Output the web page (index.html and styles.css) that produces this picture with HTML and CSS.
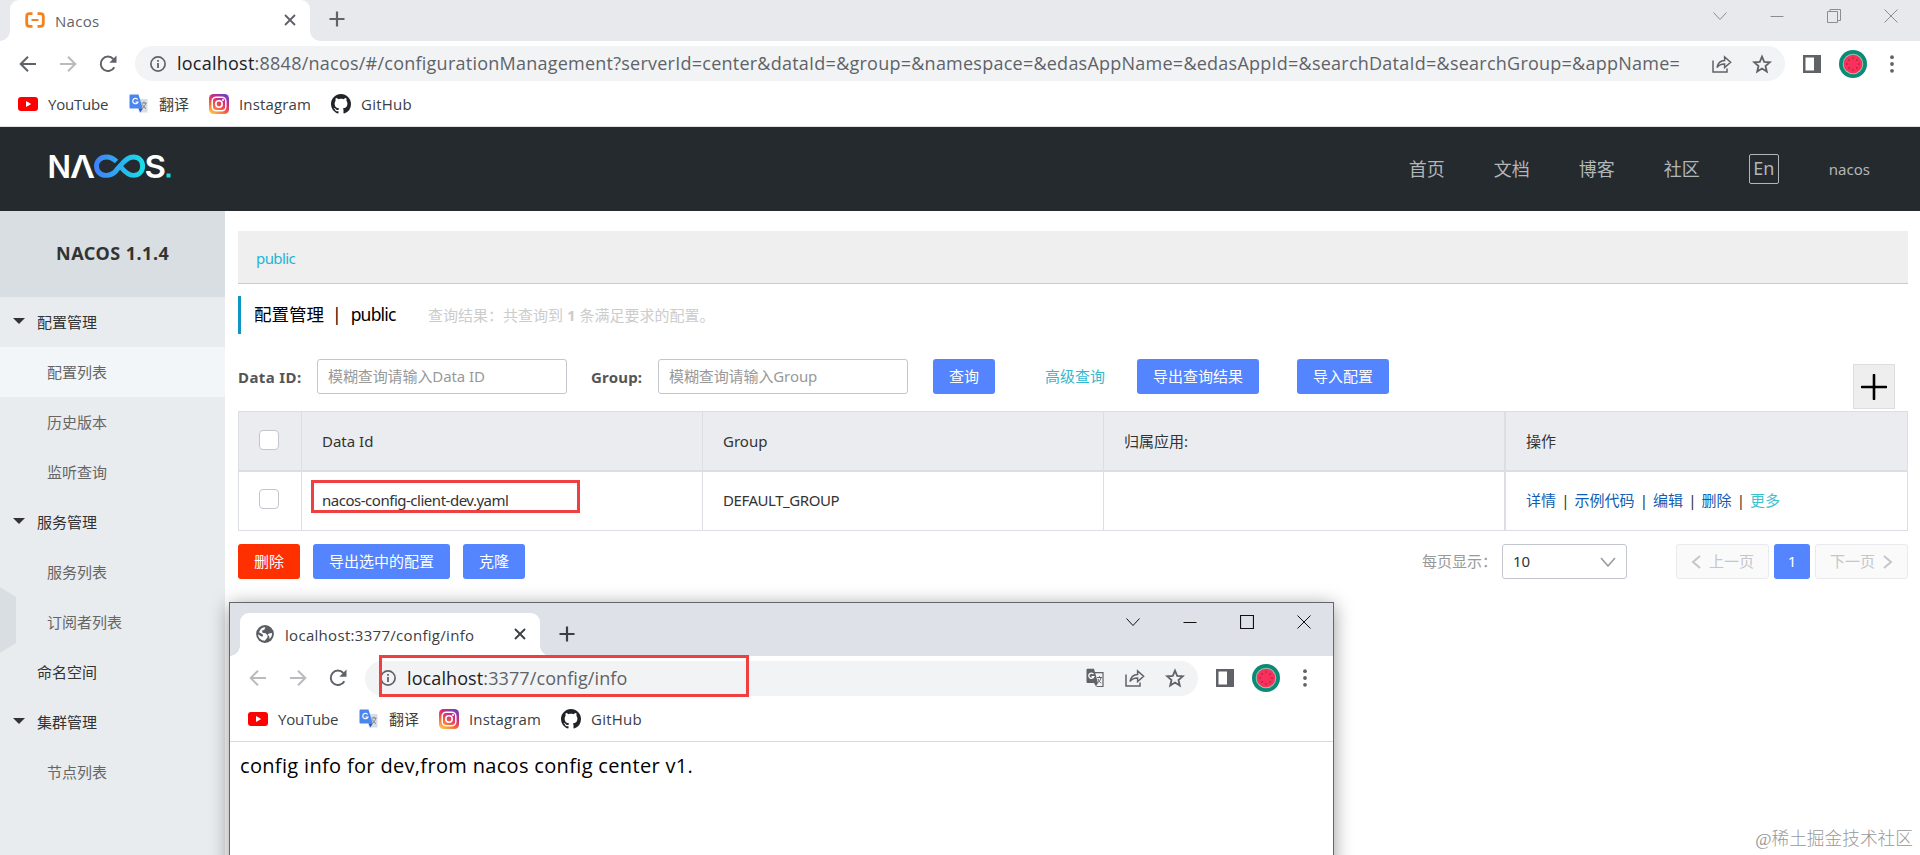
FILE: index.html
```html
<!DOCTYPE html>
<html lang="zh-CN">
<head>
    <meta charset="UTF-8">
    <title>Nacos</title>
    <link rel="stylesheet" href="styles.css">
</head>
<body>
    <!-- 公用图标 -->
    <svg class="defs" width="0" height="0">
        <defs>
            <linearGradient id="igcolor" x1="0.2" y1="1" x2="0.8" y2="0">
                <stop offset="0" stop-color="#fdc34b"/>
                <stop offset="0.35" stop-color="#f5603a"/>
                <stop offset="0.65" stop-color="#d42b7d"/>
                <stop offset="1" stop-color="#6a3fc4"/>
            </linearGradient>
            <linearGradient id="logocolor" x1="0" y1="0" x2="1" y2="0">
                <stop offset="0" stop-color="#3f83fb"/>
                <stop offset="1" stop-color="#18dce6"/>
            </linearGradient>
        </defs>
        <symbol id="back" viewBox="0 0 20 20"><path d="M18 10H3M10 2.7L2.7 10l7.3 7.3" fill="none" stroke="currentColor" stroke-width="2"/></symbol>
        <symbol id="forward" viewBox="0 0 20 20"><path d="M2 10h15M10 2.7l7.3 7.3-7.3 7.3" fill="none" stroke="currentColor" stroke-width="2"/></symbol>
        <symbol id="reload" viewBox="0 0 20 20"><path d="M16.3 13.2A7.2 7.2 0 1 1 15.3 5" fill="none" stroke="currentColor" stroke-width="2"/><path d="M18.5 1.6v7.2h-7.2z" fill="currentColor"/></symbol>
        <symbol id="info" viewBox="0 0 16 16"><circle cx="8" cy="8" r="7.1" fill="none" stroke="currentColor" stroke-width="1.7"/><path d="M7.1 7h1.8v5H7.1zM7.1 4h1.8v1.8H7.1z" fill="currentColor"/></symbol>
        <symbol id="share" viewBox="0 0 20 20"><path d="M1 6.500V18h14v-3.500M5 13.500c.8-4.400 3.400-6.700 7.600-6.900V3l6 5.300-6 5.300V10c-3.600-.1-5.700 1-7.600 3.500z" fill="none" stroke="currentColor" stroke-width="1.500"/></symbol>
        <symbol id="star" viewBox="0 0 20 20"><path d="M10 2.600l2.200 5.200 5.600.5-4.300 3.700 1.300 5.500L10 14.600l-4.800 2.900 1.300-5.500-4.300-3.700 5.600-.5z" fill="none" stroke="currentColor" stroke-width="1.800"/></symbol>
        <symbol id="panel" viewBox="0 0 18 18"><path d="M0 0h18v18H0zM2.500 2.500v13h8.500v-13z" fill="currentColor" fill-rule="evenodd"/></symbol>
        <symbol id="melon" viewBox="0 0 28 28">
            <circle cx="14" cy="14" r="14" fill="#0b8a78"/>
            <circle cx="14" cy="14" r="10.300" fill="#8fc9a8"/>
            <circle cx="14" cy="14" r="9.300" fill="#f9305c"/>
            <g fill="#8d2140"><circle cx="14" cy="8" r=".8"/><circle cx="18" cy="10" r=".8"/><circle cx="20" cy="14" r=".8"/><circle cx="18" cy="18" r=".8"/><circle cx="14" cy="20" r=".8"/><circle cx="10" cy="18" r=".8"/><circle cx="8" cy="14" r=".8"/><circle cx="10" cy="10" r=".8"/></g>
        </symbol>
        <symbol id="dots" viewBox="0 0 6 18"><g fill="currentColor"><circle cx="3" cy="2.200" r="1.900"/><circle cx="3" cy="9" r="1.900"/><circle cx="3" cy="15.800" r="1.900"/></g></symbol>
        <symbol id="close" viewBox="0 0 12 12"><path d="M1 1l10 10M11 1L1 11" fill="none" stroke="currentColor" stroke-width="1.900"/></symbol>
        <symbol id="add" viewBox="0 0 16 16"><path d="M8 .5v15M.5 8h15" fill="none" stroke="currentColor" stroke-width="2.200"/></symbol>
        <symbol id="win_down" viewBox="0 0 14 14"><path d="M.5 3.500L7 10.500l6.500-7" fill="none" stroke="currentColor"/></symbol>
        <symbol id="win_min" viewBox="0 0 14 14"><path d="M.5 7.500h13" fill="none" stroke="currentColor"/></symbol>
        <symbol id="win_restore" viewBox="0 0 14 14"><path d="M.5 2.500h10v11H.5zM3 2.500v-2h10.500v11h-3" fill="none" stroke="currentColor"/></symbol>
        <symbol id="win_max" viewBox="0 0 14 14"><path d="M.5.5h13v13H.5z" fill="none" stroke="currentColor" stroke-width="1.200"/></symbol>
        <symbol id="win_close" viewBox="0 0 14 14"><path d="M.5.5l13 13M13.500.5l-13 13" fill="none" stroke="currentColor"/></symbol>
        <symbol id="youtube" viewBox="0 0 20 20"><rect y="3" width="20" height="14" rx="3" fill="#f00"/><path d="M8 7v6l5.200-3z" fill="#fff"/></symbol>
        <symbol id="translate" viewBox="0 0 20 20">
            <path d="M7 5h11.500v13.500H10z" fill="#dadde1"/>
            <path d="M1.500.5h8l4.300 14H1.500A1 1 0 0 1 .5 13.500v-12a1 1 0 0 1 1-1z" fill="#4a86ee"/>
            <path d="M9.500 14.500h4.300l-2.500 4z" fill="#2a56c6"/>
            <path d="M8.700 5.500A2.700 2.700 0 1 0 9 8H6.500" fill="none" stroke="#fff" stroke-width="1.200"/>
            <path d="M12.500 9h5M15 7.700V9M16.800 9c-.5 2.500-2 4.500-3.500 5.500M13.500 10.500c.7 1.700 2 3.300 3.500 4.200" fill="none" stroke="#717b87" stroke-width=".9"/>
        </symbol>
        <symbol id="instagram" viewBox="0 0 20 20"><rect width="20" height="20" rx="4.500" fill="url(#igcolor)"/><rect x="3.200" y="3.200" width="13.600" height="13.600" rx="4" fill="none" stroke="#fff" stroke-width="1.500"/><circle cx="10" cy="10" r="3.200" fill="none" stroke="#fff" stroke-width="1.600"/><circle cx="14" cy="6" r="1" fill="#fff"/></symbol>
        <symbol id="github" viewBox="0 0 16 16"><path fill="#202328" d="M8 0C3.580 0 0 3.580 0 8c0 3.540 2.290 6.530 5.470 7.590.4.070.55-.17.55-.38 0-.19-.01-.82-.01-1.490-2.010.37-2.530-.49-2.690-.94-.09-.23-.48-.94-.82-1.130-.28-.15-.68-.52-.01-.53.63-.01 1.080.58 1.230.82.72 1.210 1.870.87 2.330.66.07-.52.28-.87.51-1.070-1.780-.2-3.640-.89-3.640-3.950 0-.87.31-1.590.82-2.150-.08-.2-.36-1.020.08-2.120 0 0 .67-.21 2.200.82.64-.18 1.320-.27 2-.27s1.360.09 2 .27c1.530-1.040 2.200-.82 2.200-.82.44 1.100.16 1.920.08 2.120.51.56.82 1.270.82 2.150 0 3.070-1.870 3.750-3.650 3.950.29.25.54.73.54 1.480 0 1.070-.01 1.930-.01 2.200 0 .21.15.46.55.38A8.010 8.010 0 0 0 16 8c0-4.420-3.580-8-8-8z"/></symbol>
        <symbol id="gtrans" viewBox="0 0 18 20">
            <path d="M8.500 4.700H17v13.800h-6.500" fill="none" stroke="currentColor" stroke-width="1.200"/>
            <path d="M1.500.8H8l4 14.200H1.500a1 1 0 0 1-1-1V1.800a1 1 0 0 1 1-1zM8 15h4l-2 3.500z" fill="currentColor"/>
            <path d="M7.500 6.200A2.600 2.600 0 1 0 7.800 8.700H5.500" fill="none" stroke="#fff" stroke-width="1.300"/>
            <path d="M11 9.500h5M13.500 8.200v1.300M15 9.500c-.5 2.500-1.600 4-3 5M12 11c.6 1.600 1.800 3.200 3.300 4.200" fill="none" stroke="currentColor"/>
        </symbol>
        <symbol id="globe" viewBox="0 0 18 18"><circle cx="9" cy="9" r="8.900" fill="#5a5e63"/><path d="M9.500 2.200l-1.200 2.600-2.300.8.500 2.200 3 .4 2.200 2.300-.4 2.300-2.600 3C5 15.600 2.300 13 2 9.300l3.300 2.200 1.900-.3-.6-2L3 7.200C4 4 6.500 2 9.500 2.200zM13 8.500l3-.5c.2 2.500-.8 4.700-2.500 6l-.3-2.700-1.500-1.500z" fill="#fff"/></symbol>
    </svg>

    <div class="browser">
        <div class="tabbar">
            <div class="tab">
                <svg class="tab_icon" viewBox="0 0 20 16"><path d="M7.500 1.700H4.500Q1.700 1.700 1.700 4.500v7q0 2.800 2.800 2.800h3M12.500 1.700h3q2.800 0 2.800 2.800v7q0 2.800-2.800 2.800h-3" fill="none" stroke="#f5801f" stroke-width="2.800"/><path d="M6.500 8h7" stroke="#f5801f" stroke-width="2"/></svg>
                <span class="tab_name">Nacos</span>
                <svg class="tab_close"><use href="#close"/></svg>
            </div>
            <svg class="tab_add"><use href="#add"/></svg>
            <div class="winbtn">
                <svg><use href="#win_down"/></svg>
                <svg><use href="#win_min"/></svg>
                <svg><use href="#win_restore"/></svg>
                <svg><use href="#win_close"/></svg>
            </div>
        </div>
        <div class="toolbar">
            <svg class="nav_icon"><use href="#back"/></svg>
            <svg class="nav_icon off"><use href="#forward"/></svg>
            <svg class="nav_icon"><use href="#reload"/></svg>
            <div class="address">
                <svg class="info"><use href="#info"/></svg>
                <span class="url"><b>localhost</b>:8848/nacos/#/configurationManagement?serverId=center&amp;dataId=&amp;group=&amp;namespace=&amp;edasAppName=&amp;edasAppId=&amp;searchDataId=&amp;searchGroup=&amp;appName=</span>
                <svg class="addr_icon"><use href="#share"/></svg>
                <svg class="addr_icon"><use href="#star"/></svg>
            </div>
            <svg class="panel"><use href="#panel"/></svg>
            <svg class="melon"><use href="#melon"/></svg>
            <svg class="dots"><use href="#dots"/></svg>
        </div>
        <div class="bookmarks">
            <a><svg><use href="#youtube"/></svg><span class="bm_yt">YouTube</span></a>
            <a><svg><use href="#translate"/></svg><span class="bm_tr">翻译</span></a>
            <a><svg><use href="#instagram"/></svg><span class="bm_ig">Instagram</span></a>
            <a><svg><use href="#github"/></svg><span class="bm_gh">GitHub</span></a>
        </div>
    </div>

    <div class="header">
        <svg class="logo" viewBox="0 -12 122 50">
            <g fill="#fff" font-family="Inter, sans-serif" font-weight="600" font-size="31.500">
                <text x="-1.500" y="24.500" textLength="23.500" lengthAdjust="spacingAndGlyphs">N</text>
                <text x="21" y="24.500" textLength="25" lengthAdjust="spacingAndGlyphs">Λ</text>
                <text x="95.500" y="24.500" textLength="21.500" lengthAdjust="spacingAndGlyphs">S</text>
            </g>
            <path d="M67.500 8.500C64.500 5.500 61.500 4 57.500 4c-5.800 0-10 3.800-10 9.200s4.200 9.200 10 9.200c4 0 7-1.700 10-4.900M67 17.500l4.500-5c4-5 7.500-8.500 12.800-8.500 5.500 0 9.300 3.800 9.300 9.200s-3.800 9.200-9.300 9.200c-4.800 0-8.300-3.400-12.300-8.200" fill="none" stroke="url(#logocolor)" stroke-width="4.900"/>
            <rect x="117.500" y="20.500" width="4" height="4" fill="#18dce6"/>
        </svg>
        <div class="menu">
            <a>首页</a>
            <a>文档</a>
            <a>博客</a>
            <a>社区</a>
            <span class="lang">En</span>
            <span class="user">nacos</span>
        </div>
    </div>

    <div class="main">
        <div class="side">
            <h1>NACOS 1.1.4</h1>
            <ul>
                <li class="group"><i></i>配置管理</li>
                <li class="on">配置列表</li>
                <li>历史版本</li>
                <li>监听查询</li>
                <li class="group"><i></i>服务管理</li>
                <li>服务列表</li>
                <li>订阅者列表</li>
                <li class="group alone">命名空间</li>
                <li class="group"><i></i>集群管理</li>
                <li>节点列表</li>
            </ul>
            <div class="fold"></div>
        </div>
        <div class="content">
            <div class="space">public</div>
            <div class="title">
                <h2>配置管理<em>|</em><span>public</span></h2>
                <span>查询结果：共查询到 <strong>1</strong> 条满足要求的配置。</span>
            </div>
            <div class="search">
                <label class="lab1">Data ID:</label>
                <div class="input">模糊查询请输入Data ID</div>
                <label class="lab2">Group:</label>
                <div class="input">模糊查询请输入Group</div>
                <a class="btn btn_query">查询</a>
                <a class="more">高级查询</a>
                <a class="btn btn_export">导出查询结果</a>
                <a class="btn">导入配置</a>
                <div class="plus"><svg viewBox="0 0 26 26"><path d="M13 1v24M1 13h24" stroke="#000" stroke-width="2.600" stroke-linecap="round"/></svg></div>
            </div>
            <div class="table">
                <div class="row thead">
                    <div><i class="check"></i></div>
                    <div>Data Id</div>
                    <div>Group</div>
                    <div>归属应用:</div>
                    <div>操作</div>
                </div>
                <div class="row">
                    <div><i class="check"></i></div>
                    <div class="t_file">nacos-config-client-dev.yaml<span class="mark"></span></div>
                    <div class="t_def">DEFAULT_GROUP</div>
                    <div></div>
                    <div class="links"><a>详情</a><s>|</s><a>示例代码</a><s>|</s><a>编辑</a><s>|</s><a>删除</a><s>|</s><a class="cyan">更多</a></div>
                </div>
            </div>
            <div class="foot">
                <a class="btn red">删除</a>
                <a class="btn">导出选中的配置</a>
                <a class="btn">克隆</a>
                <span class="size">每页显示：</span>
                <div class="select">10<svg viewBox="0 0 16 10"><path d="M1 1l7 8 7-8" fill="none" stroke="#999" stroke-width="1.500"/></svg></div>
                <div class="page prev"><svg viewBox="0 0 10 14"><path d="M9 1L2 7l7 6" fill="none" stroke="#c4c6c9" stroke-width="2"/></svg>上一页</div>
                <div class="page cur">1</div>
                <div class="page">下一页<svg viewBox="0 0 10 14"><path d="M1 1l7 6-7 6" fill="none" stroke="#c4c6c9" stroke-width="2"/></svg></div>
            </div>
        </div>
    </div>

    <!-- 弹出的浏览器窗口 -->
    <div class="browser popup">
        <div class="tabbar">
            <div class="tab">
                <svg class="tab_icon"><use href="#globe"/></svg>
                <span class="tab_name">localhost:3377/config/info</span>
                <svg class="tab_close"><use href="#close"/></svg>
            </div>
            <svg class="tab_add"><use href="#add"/></svg>
            <div class="winbtn">
                <svg><use href="#win_down"/></svg>
                <svg><use href="#win_min"/></svg>
                <svg><use href="#win_max"/></svg>
                <svg><use href="#win_close"/></svg>
            </div>
        </div>
        <div class="toolbar">
            <svg class="nav_icon off"><use href="#back"/></svg>
            <svg class="nav_icon off"><use href="#forward"/></svg>
            <svg class="nav_icon"><use href="#reload"/></svg>
            <div class="address">
                <svg class="info"><use href="#info"/></svg>
                <span class="url"><b>localhost</b>:3377/config/info</span>
                <svg class="addr_icon"><use href="#gtrans"/></svg>
                <svg class="addr_icon"><use href="#share"/></svg>
                <svg class="addr_icon"><use href="#star"/></svg>
                <span class="mark"></span>
            </div>
            <svg class="panel"><use href="#panel"/></svg>
            <svg class="melon"><use href="#melon"/></svg>
            <svg class="dots"><use href="#dots"/></svg>
        </div>
        <div class="bookmarks">
            <a><svg><use href="#youtube"/></svg><span class="bm_yt">YouTube</span></a>
            <a><svg><use href="#translate"/></svg><span class="bm_tr">翻译</span></a>
            <a><svg><use href="#instagram"/></svg><span class="bm_ig">Instagram</span></a>
            <a><svg><use href="#github"/></svg><span class="bm_gh">GitHub</span></a>
        </div>
        <p class="result">config info for dev,from nacos config center v1.</p>
    </div>

    <div class="water">@稀土掘金技术社区</div>
</body>
</html>
```

FILE: styles.css
```css
*{
    margin: 0;
    padding: 0;
    box-sizing: border-box;
}
html,body{
    height: 855px;
    overflow: hidden;
}
body{
    position: relative;
    background-color: #fff;
    color: #333;
    font: 15px/20px "Noto Sans", "Noto Sans CJK SC", sans-serif;
    white-space: nowrap;
}
ul{
    list-style: none;
}
svg{
    display: block;
    flex: none;
}
.defs{
    position: absolute;
}
/* 浏览器窗口 */
.browser{
    height: 127px;
    background-color: #fff;
    border-bottom: 1px solid #dfe1e5;
    font-family: "Open Sans", "Noto Sans CJK SC", sans-serif;
}
.tabbar{
    height: 41px;
    display: flex;
    align-items: flex-end;
    padding-left: 10px;
    background-color: #e8e9ed;
    color: #5f6368;
}
.tab{
    width: 300px;
    height: 41px;
    display: flex;
    align-items: center;
    padding: 0 14px 2px 15px;
    position: relative;
    background-color: #fff;
    border-radius: 9px 9px 0 0;
}
.tab::before,.tab::after{
    content: "";
    width: 10px;
    height: 10px;
    position: absolute;
    bottom: 0;
    left: -10px;
    background: radial-gradient(circle at 0 0, transparent 9.5px, #fff 10px);
}
.tab::after{
    left: auto;
    right: -10px;
    background: radial-gradient(circle at 100% 0, transparent 9.5px, #fff 10px);
}
.tab_icon{
    width: 20px;
    height: 16px;
    margin-right: 10px;
}
.tab_name{
    flex: 1;
    padding-top: 2px;
    font-size: 15px;
    letter-spacing: .3px;
}
.tab_close{
    width: 12px;
    height: 12px;
}
.tab_add{
    width: 16px;
    height: 16px;
    margin: 0 0 14px 19px;
}
.winbtn{
    display: flex;
    gap: 43px;
    align-self: flex-start;
    margin-left: auto;
    padding: 9px 22px 0 0;
    color: #8b8d91;
}
.winbtn svg{
    width: 14px;
    height: 14px;
}
.toolbar{
    height: 45px;
    display: flex;
    align-items: center;
    padding-left: 18px;
    color: #5f6368;
}
.nav_icon{
    width: 20px;
    height: 20px;
    margin-right: 20px;
}
.off{
    color: #b9bbbe;
}
.address{
    flex: 1;
    height: 35px;
    display: flex;
    align-items: center;
    gap: 20px;
    margin-left: -3px;
    padding: 0 13px 0 15px;
    position: relative;
    background-color: #f1f3f4;
    border-radius: 18px;
}
.info{
    width: 16px;
    height: 16px;
}
.url{
    flex: 1;
    margin: 0 -10px 2px -9px;
    font-size: 18px;
    letter-spacing: .24px;
}
.popup .url{
    margin-right: 0;
    margin-bottom: 0;
    letter-spacing: .1px;
}
.url b{
    color: #202124;
    font-weight: 400;
}
.addr_icon{
    width: 20px;
    height: 20px;
}
.panel{
    width: 18px;
    height: 18px;
    margin: 0 18px;
}
.melon{
    width: 28px;
    height: 28px;
    margin-right: 22px;
}
.dots{
    width: 6px;
    height: 18px;
    margin-right: 25px;
}
.bookmarks{
    height: 40px;
    display: flex;
    padding: 0 18px 4px;
    color: #3c4043;
}
.bookmarks a{
    display: flex;
    align-items: center;
    gap: 10px;
}
.bookmarks svg{
    width: 20px;
    height: 20px;
}
.bm_yt{
    width: 81px;
    letter-spacing: -.2px;
}
.bm_tr{
    width: 50px;
}
.bm_ig{
    width: 92px;
    letter-spacing: .15px;
}
.bm_gh{
    letter-spacing: .25px;
}
/* 顶部导航 */
.header{
    height: 84px;
    display: flex;
    align-items: center;
    justify-content: space-between;
    padding: 0 50px 0 49px;
    background-color: #252a2f;
    color: #b3b6b8;
}
.logo{
    width: 122px;
    height: 50px;
    margin-bottom: 6px;
}
.menu{
    display: flex;
    align-items: center;
    padding-bottom: 1px;
    font-size: 18px;
}
.menu a{
    width: 85px;
}
.lang{
    width: 30px;
    height: 30px;
    border: 1px solid #b3b6b8;
    border-radius: 2px;
    line-height: 26px;
    text-align: center;
}
.user{
    margin-left: 50px;
    font-size: 15px;
}
/* 左侧菜单 */
.main{
    height: 644px;
    display: flex;
}
.side{
    width: 225px;
    position: relative;
    background-color: #e8ecef;
}
.side h1{
    height: 86px;
    padding-left: 56px;
    background-color: #d8dee1;
    font-size: 18px;
    letter-spacing: .5px;
    line-height: 85px;
}
.side li{
    height: 50px;
    padding-left: 47px;
    color: #666;
    line-height: 50px;
}
.side .on{
    background-color: #f3f6f8;
}
.side .group{
    display: flex;
    align-items: center;
    padding-left: 13px;
    color: #333;
}
.side .alone{
    padding-left: 37px;
}
.group i{
    margin: -2px 12px 0 0;
    border: 6px solid transparent;
    border-top-color: #333;
    border-bottom: 0;
}
.fold{
    width: 16px;
    height: 66px;
    position: absolute;
    left: 0;
    top: 376px;
    background-color: #d8dee2;
    clip-path: polygon(0 0, 100% 15%, 100% 85%, 0 100%);
}
/* 配置列表 */
.content{
    flex: 1;
    padding: 20px 12px 0 13px;
}
.space{
    height: 53px;
    padding: 1px 0 0 18px;
    background-color: #efefef;
    border-bottom: 1px solid #ccc;
    color: #1db5d9;
    letter-spacing: -.6px;
    line-height: 53px;
}
.title{
    height: 38px;
    display: flex;
    align-items: center;
    margin-top: 12px;
    padding-left: 13px;
    border-left: 3px solid #0f96c3;
    color: #ccc;
}
.title h2{
    width: 174px;
    padding-bottom: 2px;
    color: #000;
    font-size: 17.500px;
    font-weight: 400;
}
.title h2 span{
    letter-spacing: -.8px;
}
.title em{
    margin: 0 9px 0 8px;
    font-style: normal;
}
.search{
    height: 35px;
    display: flex;
    align-items: center;
    margin-top: 25px;
    position: relative;
}
.search label{
    color: #555;
    font-weight: 700;
}
.lab1{
    width: 79px;
    letter-spacing: .4px;
}
.lab2{
    width: 67px;
    margin-left: 24px;
    letter-spacing: .2px;
}
.input{
    width: 250px;
    height: 35px;
    padding-left: 10px;
    border: 1px solid #c4c6cf;
    border-radius: 3px;
    color: #999;
    letter-spacing: -.1px;
    line-height: 33px;
}
.btn{
    height: 35px;
    padding: 0 16px;
    background-color: #5584ff;
    border-radius: 3px;
    color: #fff;
    line-height: 34px;
}
.btn_query{
    margin-left: 25px;
}
.more{
    margin: 0 32px 2px 50px;
    color: #33b9d0;
}
.btn_export{
    margin-right: 38px;
}
.plus{
    width: 42px;
    height: 45px;
    position: absolute;
    right: 13px;
    top: 5px;
    padding: 9px 7px;
    background-color: #eee;
    border: 1px solid #ddd;
}
.table{
    margin-top: 17px;
    border: 1px solid #dcdee3;
}
.row{
    height: 58px;
    display: grid;
    grid-template-columns: 63px 401px 401px 402px 1fr;
}
.row>div{
    display: flex;
    align-items: center;
    padding: 0 0 2px 20px;
    position: relative;
    border-right: 1px solid #dcdee3;
}
.row>div:nth-child(4){
    border-right-width: 2px;
}
.row>div:last-child{
    border-right: 0;
}
.thead{
    height: 60px;
    background-color: #ebecf0;
    border-bottom: 2px solid #dcdee3;
}
.thead>div{
    padding-bottom: 0;
}
.check{
    width: 20px;
    height: 20px;
    margin-top: -3px;
    background-color: #fff;
    border: 1px solid #c4c6cf;
    border-radius: 4px;
}
.row>.t_file{
    letter-spacing: -.48px;
}
.row>.t_def{
    letter-spacing: -.45px;
}
.mark{
    width: 269px;
    height: 33px;
    position: absolute;
    left: 9px;
    top: 8px;
    border: 3px solid #ee3f41;
}
.links a{
    color: #0f5db5;
}
.links s{
    width: 18.500px;
    text-align: center;
    text-decoration: none;
}
.links .cyan{
    color: #3ec1cf;
}
.foot{
    display: flex;
    margin-top: 13px;
    gap: 13px;
    line-height: 35px;
}
.red{
    background-color: #ff3000;
}
.size{
    width: 67px;
    margin-left: auto;
    color: #999;
}
.select{
    width: 125px;
    height: 35px;
    display: flex;
    align-items: center;
    justify-content: space-between;
    margin-right: 36px;
    padding: 0 10px;
    border: 1px solid #c4c6cf;
    border-radius: 3px;
    color: #333;
}
.select svg{
    width: 16px;
    height: 10px;
}
.page{
    width: 93px;
    height: 35px;
    display: flex;
    align-items: center;
    justify-content: center;
    gap: 8px;
    margin-left: -8px;
    background-color: #fafafb;
    border: 1px solid #e8eaee;
    border-radius: 3px;
    color: #c4c6c9;
}
.page svg{
    width: 10px;
    height: 14px;
}
.prev{
    margin-left: 0;
}
.cur{
    width: 36px;
    background-color: #5584ff;
    border: 0;
    color: #fff;
}
/* 弹出窗口 */
.popup{
    width: 1105px;
    height: 270px;
    position: absolute;
    left: 229px;
    top: 602px;
    border: 1px solid #63666a;
    box-shadow: 0 3px 18px rgba(0, 0, 0, .4);
}
.popup .tabbar{
    height: 53px;
    background-color: #dee1e7;
    color: #3c4043;
}
.popup .tab{
    height: 43px;
}
.popup .tab_icon{
    width: 18px;
    height: 18px;
    margin: 0 11px 0 1px;
}
.popup .winbtn{
    padding-top: 12px;
    color: #111;
}
.popup .toolbar{
    height: 44px;
}
.popup .bookmarks{
    height: 42px;
    padding-bottom: 3px;
    border-bottom: 1px solid #dadce0;
}
.popup .mark{
    width: 370px;
    height: 42px;
    left: 14px;
    top: -6px;
}
.result{
    padding: 11px 10px;
    color: #000;
    font-size: 20px;
    letter-spacing: .33px;
    line-height: 26px;
}
.water{
    position: absolute;
    right: 7px;
    bottom: 4px;
    color: #999;
    font: 300 17.700px/24px "Liberation Serif", "Noto Sans CJK SC", serif;
}
```
